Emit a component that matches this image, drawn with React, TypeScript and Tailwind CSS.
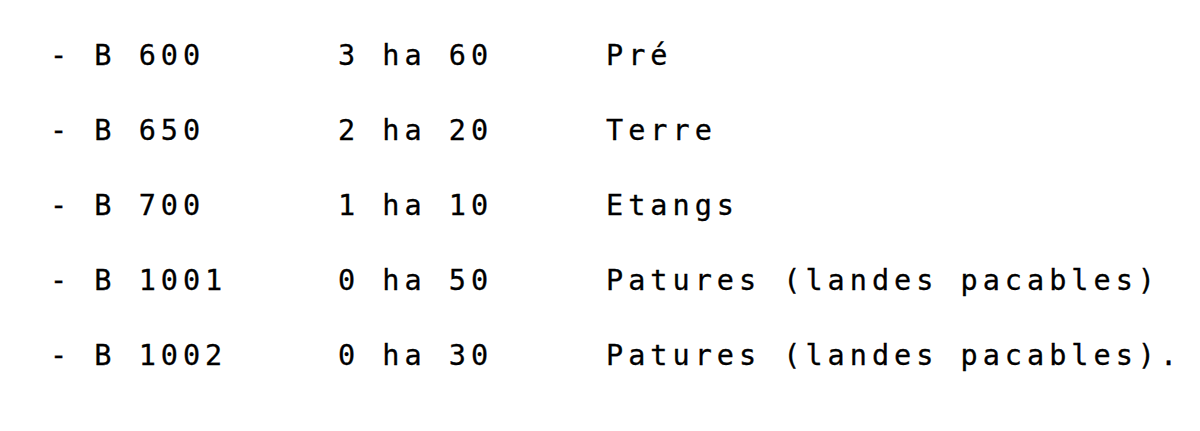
import React from "react";

// Parcelles cadastrales (relevé)
const parcelles = [
  { code: "B 600", surface: "3 ha 60", nature: "Pré" },
  { code: "B 650", surface: "2 ha 20", nature: "Terre" },
  { code: "B 700", surface: "1 ha 10", nature: "Etangs" },
  { code: "B 1001", surface: "0 ha 50", nature: "Patures (landes pacables)" },
  { code: "B 1002", surface: "0 ha 30", nature: "Patures (landes pacables)." },
];

export default function App() {
  return (
    <div
      className="w-[1200px] h-[431px] bg-white text-black pt-[18px] pl-[50px] overflow-hidden [-webkit-text-stroke:0.3px_black]"
      style={{ fontFamily: '"DejaVu Sans Mono", monospace' }}
    >
      {parcelles.map((p) => (
        <div key={p.code} className="flex h-[75px] leading-[75px] text-[28.5px] tracking-[5px] whitespace-pre">
          <span className="w-[288px]">- {p.code}</span>
          <span className="w-[268px]">{p.surface}</span>
          <span>{p.nature}</span>
        </div>
      ))}
    </div>
  );
}
